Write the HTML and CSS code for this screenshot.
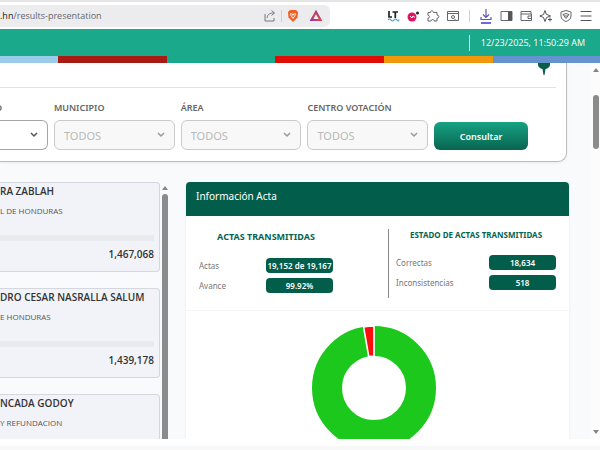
FILE: index.html
```html
<!DOCTYPE html>
<html lang="es">
<head>
<meta charset="utf-8">
<title>Resultados</title>
<link rel="stylesheet" href="styles.css">
</head>
<body>
<div class="toolbar">
  <div class="address">
    <span class="url"><b>.hn</b>/results-presentation</span>
    <svg class="icon" viewBox="0 0 14 14"><path d="M2 5v7h9V9M4 9c.5-4 3-5 7-5M8.500 1.500 11.500 4 8.500 6.500" fill="none" stroke="#77777d"/></svg>
    <span class="sep"></span>
    <svg class="icon" viewBox="0 0 14 14"><path d="M4 1h6l2 2-.5 5.500L7 13 2.500 8.500 2 3z" fill="#ee6024"/><path d="M4 4l2 .7h2l2-.7-.7 3L7 10 4.700 7z" fill="#fff"/><path d="M5 5l1.500.8L7 8l.5-2.200L9 5 8.500 7 7 8.500 5.500 7z" fill="#ee6024"/></svg>
    <svg class="icon tri" viewBox="0 0 14 14"><defs><linearGradient id="g" x1="0" y1="1" x2="1" y2="0"><stop offset="0" stop-color="#8f3a9c"/><stop offset=".5" stop-color="#e5434d"/><stop offset="1" stop-color="#5b3bb0"/></linearGradient></defs><path d="M7 3 11.500 11h-9z" fill="none" stroke="url(#g)" stroke-width="2.200" stroke-linejoin="miter"/></svg>
  </div>
  <div class="tools">
    <svg class="icon" viewBox="0 0 14 14"><path d="M3 2v6h3M6.500 3H12M9.300 3v6" fill="none" stroke="#222" stroke-width="1.700"/><path d="M2 11q1.500-2 3 0t3 0 3 0 2-.5" fill="none" stroke="#3b9dbf" stroke-width="1.200"/></svg>
    <svg class="icon" viewBox="0 0 14 14"><circle cx="6" cy="8" r="4.500" fill="#e3125f"/><path d="M4 7l2 2 1-2 2 1.500" stroke="#fff" fill="none"/><circle cx="11.500" cy="4" r="1.500" fill="#222"/></svg>
    <svg class="icon" viewBox="0 0 14 14"><path d="M2 3.500h2.500C4 1.500 7.500 1 7.500 3.500H11V6c2.500-.3 2.500 3.500 0 3.200V12H8c.3-2-3-2-2.800 0H2V9c2 .2 2-2.800 0-2.600z" fill="none" stroke="#66666b" stroke-linejoin="round"/></svg>
    <svg class="icon" viewBox="0 0 14 14"><path d="M1.500 2.500h11v9h-11zM1.500 4.500h11M8 9.500l1.500 1.500" fill="none" stroke="#66666b"/><circle cx="7" cy="8" r="1.500" fill="none" stroke="#66666b"/></svg>
    <span class="sep"></span>
    <svg class="icon down" viewBox="0 0 14 16"><path d="M7 1v8M4 6.500l3 3 3-3M2 9v2.500h10V9" fill="none" stroke="#5a55c8" stroke-width="1.200"/><path d="M2 15h10" stroke="#3d3ad0" stroke-width="1.500"/></svg>
    <svg class="icon" viewBox="0 0 14 14"><path d="M2 2.500h11v9H2z" fill="none" stroke="#66666b"/><path d="M9 2.500h4v9H9z" fill="#55555a"/></svg>
    <svg class="icon" viewBox="0 0 14 14"><path d="M12 5V2.500H2v9h10.500V5H2M12.500 7H9v2.500h3.500" fill="none" stroke="#66666b"/></svg>
    <svg class="icon" viewBox="0 0 14 14"><path d="M6 1.500l1.300 3.700L11.500 7 7.500 8.500 6 12.500 4.500 8.500.8 7l3.700-1.500z" fill="none" stroke="#55555a" stroke-linejoin="round"/><path d="M11 8.500v4M9 10.500h4" stroke="#55555a"/></svg>
    <svg class="icon" viewBox="0 0 14 14"><path d="M7 1.500l5 1.500v4c0 3-2.500 4.500-5 5.500C4.500 11.500 2 10 2 7V3z" fill="none" stroke="#66666b"/><path d="M4 5.500q3-2 6 0L7 9.500zM5 7h4" fill="none" stroke="#66666b"/></svg>
    <svg class="icon" viewBox="0 0 14 14"><path d="M1.500 2.500h11M1.500 7h11M1.500 11.500h11" stroke="#55555a" stroke-width="1.200"/></svg>
  </div>
</div>
<header class="banner"><time class="clock">12/23/2025, 11:50:29 AM</time></header>
<div class="stripes"><i class="sky"></i><i class="wine"></i><i class="green"></i><i class="red"></i><i class="amber"></i><i class="blue"></i></div>

<div class="page">
  <main class="main">
    <form class="filters">
      <div class="top"><svg class="pin" viewBox="0 0 12 12"><path d="M0 0h12v2Q11.500 5 7.500 6L6.500 12h-1L4.500 6Q.5 5 0 2z" fill="#0a5e4a"/></svg></div>
      <div class="fields">
        <div class="field first">
          <label for="dep">O</label>
          <div class="pick"><select id="dep"><option></option></select><svg class="chev" viewBox="0 0 8 6"><path d="M1 1l3 3 3-3" /></svg></div>
        </div>
        <div class="field">
          <label for="mun">MUNICIPIO</label>
          <div class="pick"><select id="mun" disabled><option>TODOS</option></select><svg class="chev" viewBox="0 0 8 6"><path d="M1 1l3 3 3-3" /></svg></div>
        </div>
        <div class="field">
          <label for="area">ÁREA</label>
          <div class="pick"><select id="area" disabled><option>TODOS</option></select><svg class="chev" viewBox="0 0 8 6"><path d="M1 1l3 3 3-3" /></svg></div>
        </div>
        <div class="field">
          <label for="cen">CENTRO VOTACIÓN</label>
          <div class="pick"><select id="cen" disabled><option>TODOS</option></select><svg class="chev" viewBox="0 0 8 6"><path d="M1 1l3 3 3-3" /></svg></div>
        </div>
        <button class="query" type="button">Consultar</button>
      </div>
    </form>

    <div class="results">
      <div class="list">
        <article class="card"><h2>RA ZABLAH</h2><p>L DE HONDURAS</p><div class="bar"></div><strong>1,467,068</strong></article>
        <article class="card"><h2>DRO CESAR NASRALLA SALUM</h2><p>E HONDURAS</p><div class="bar"></div><strong>1,439,178</strong></article>
        <article class="card"><h2>NCADA GODOY</h2><p>Y REFUNDACION</p><div class="bar"></div></article>
      </div>
      <div class="track"><i class="up"></i><i class="thumb"></i></div>
      <section class="panel">
        <h2 class="head">Información Acta</h2>
        <div class="stats">
          <div class="group left">
            <h3>ACTAS TRANSMITIDAS</h3>
            <dl><dt>Actas</dt><dd>19,152 de 19,167</dd><dt>Avance</dt><dd>99.92%</dd></dl>
          </div>
          <div class="group right">
            <h3>ESTADO DE ACTAS TRANSMITIDAS</h3>
            <dl><dt>Correctas</dt><dd>18,634</dd><dt>Inconsistencias</dt><dd>518</dd></dl>
          </div>
        </div>
        <div class="chart">
          <svg class="donut" viewBox="0 0 126 126">
            <circle cx="63" cy="63" r="47" fill="none" stroke="#1bc81b" stroke-width="30"/>
            <path d="M63 1A62 62 0 0 0 52.600 1.900L57.700 31.500A32 32 0 0 1 63 31z" fill="#f90d0d" stroke="#fff" stroke-width="1.600"/>
          </svg>
        </div>
      </section>
    </div>
  </main>
  <div class="gutter"><i class="up"></i><i class="thumb"></i><i class="dn"></i></div>
</div>
<footer class="foot"></footer>
</body>
</html>
```
FILE: styles.css
```css
* { box-sizing: border-box; }
body {
  margin: 0;
  height: 100vh;
  display: flex;
  flex-direction: column;
  overflow: hidden;
  background: #fff;
  color: #333;
  font-family: "Noto Sans", "Open Sans", sans-serif;
}
h2, h3, p, dl, dd { margin: 0; }
i { display: block; }

.toolbar {
  flex: none;
  display: flex;
  justify-content: space-between;
  align-items: center;
  height: 29px;
  padding: 0 7px 0 0;
  border-top: 2px solid #e5e5e8;
}
.address {
  flex: 0 0 55vw;
  display: flex;
  align-items: center;
  height: 22px;
  padding-right: 7px;
  border-radius: 0 6px 6px 0;
  background: #ececef;
}
.url { flex: 1; font: 9px "Open Sans", sans-serif; color: #66666c; }
.url b { font-weight: 400; color: #222; }
.icon { flex: none; width: 14px; height: 14px; }
.tri { margin-left: 9px; }
.sep { width: 1px; height: 12px; margin: 0 4px; background: #cfcfd4; }
.tools { display: flex; align-items: center; gap: 6px; }
.tools .sep { margin: 0 3px; }
.down { height: 16px; }

.banner {
  flex: none;
  display: flex;
  justify-content: flex-end;
  align-items: center;
  height: 27px;
  padding-right: 15px;
  background: #1aa98b;
}
.clock {
  padding-left: 11px;
  border-left: 1px solid #d6f0ea;
  font: 9px/16px "Open Sans", sans-serif;
  color: #fff;
}
.stripes { flex: none; display: grid; grid-template-columns: 58fr 109fr 108fr 109fr 109fr 107fr; height: 7px; }
.sky { background: #9bcdea; }
.wine { background: #a81a12; }
.green { background: #1aa98b; }
.red { background: #e00d05; }
.amber { background: #f0970c; }
.blue { background: #6493cd; }

.page { flex: 1; min-height: 0; display: flex; background: #f9fafb; }
.main { flex: 1; min-width: 0; display: flex; flex-direction: column; }
.gutter {
  flex: none;
  display: flex;
  flex-direction: column;
  align-items: center;
  width: 9px;
  padding: 5px 0;
  background: #fcfcfc;
}
.gutter .thumb { width: 6px; height: 54px; margin-top: 23px; border-radius: 3px; background: #8b8b8b; }
.up { border: 3px solid transparent; border-top: 0; border-bottom: 4px solid #858585; }
.dn { margin-top: auto; border: 3px solid transparent; border-bottom: 0; border-top: 4px solid #858585; }

.filters {
  flex: none;
  margin-right: 24px;
  padding-bottom: 11px;
  border: 1px solid #bdbdbf;
  border-width: 0 1px 1px 0;
  border-radius: 0 0 9px 0;
  background: #fff;
  box-shadow: 0 1px 3px #0001;
}
.top {
  display: flex;
  justify-content: flex-end;
  height: 25px;
  margin-right: 10px;
  padding-right: 6px;
  border-bottom: 1px solid #e2e2e2;
}
.pin { width: 12px; height: 12px; }
.fields {
  display: grid;
  grid-template-columns: 48fr 121fr 121fr 121fr 94fr;
  gap: 6px;
  align-items: end;
  padding: 12px 38px 0 0;
}
.field { min-width: 0; }
.field label { display: block; margin-bottom: 5px; font-size: 9px; line-height: 15px; font-weight: 600; color: #666; white-space: nowrap; }
.first label { text-indent: -5px; }
.pick { position: relative; }
.pick select {
  display: block;
  width: 100%;
  height: 30px;
  padding: 0 9px;
  appearance: none;
  border: 1px solid #cacaca;
  border-radius: 6px;
  background: #f8f8f8;
  color: #b9b9b9;
  font: 11px "Noto Sans", sans-serif;
  opacity: 1;
}
.first select { border-color: #a5a5a5; border-left: 0; border-radius: 0 6px 6px 0; background: #fff; }
.chev { position: absolute; top: 12px; right: 10px; width: 8px; height: 6px; fill: none; stroke: #999; stroke-width: 1.500; }
.first .chev { stroke: #555; }
.query {
  height: 28px;
  padding: 0;
  border: 0;
  border-radius: 6px;
  background: linear-gradient(#17a283, #086550);
  color: #fff;
  font: 600 9px "Noto Sans", sans-serif;
}

.results { flex: 1; min-height: 0; display: flex; margin-top: 20px; overflow: hidden; }
.list { flex: 0 1 160px; display: flex; flex-direction: column; gap: 16px; }
.card {
  flex: none;
  display: flex;
  flex-direction: column;
  height: 90px;
  padding: 0 5px 0 0;
  border: 1px solid #d4d7dd;
  border-left: 0;
  border-radius: 0 4px 4px 0;
  background: #f2f3f8;
  font-family: "Open Sans", sans-serif;
}
.card h2 { font-size: 10px; line-height: 16px; font-weight: 600; white-space: nowrap; }
.card p { margin-top: 4px; font-size: 8px; line-height: 16px; color: #555; }
.bar { height: 6px; margin-top: 16px; background: #e9eaee; }
.card strong { align-self: flex-end; margin-top: 5px; font-size: 10px; line-height: 16px; font-weight: 600; }
.track { flex: none; display: flex; flex-direction: column; align-items: center; width: 6px; margin: 4px 18px 0 2px; }
.track .thumb { flex: 1; width: 6px; margin-top: 4px; border-radius: 3px 3px 0 0; background: #8b8b8b; }

.panel { flex: 1; display: flex; flex-direction: column; margin-right: 22px; border-radius: 4px 4px 0 0; background: #fff; overflow: hidden; box-shadow: 0 0 3px #0001; }
.head { flex: none; height: 34px; padding: 6px 10px; background: #025e4b; color: #fff; font: 400 10px/16px "Noto Sans", sans-serif; }
.stats { flex: none; display: grid; grid-template-columns: 203fr 180fr; height: 95px; padding-top: 13px; border-bottom: 1px solid #f5f5f5; }
.group h3 { color: #08644f; font-size: 9px; line-height: 12px; font-weight: 700; text-align: center; white-space: nowrap; }
.group dl { display: grid; grid-template-columns: 1fr 67px; gap: 5px 0; align-items: center; }
.group dt { color: #777; font-size: 8px; line-height: 15px; }
.group dd { border-radius: 4px; background: #025e4b; color: #fff; font-size: 8px; line-height: 15px; font-weight: 600; text-align: center; white-space: nowrap; }
.left { height: 69px; padding: 2px 55px 0 13px; border-right: 1px solid #888; }
.left dl { margin-top: 15px; }
.right { padding: 0 13px 0 7px; }
.right h3 { font-size: 8px; }
.right dl { margin-top: 14px; }
.chart { flex: 1; min-height: 0; display: flex; justify-content: center; align-items: flex-start; padding-top: 14px; overflow: hidden; }
.donut { flex: none; width: 126px; height: 126px; margin-right: 8px; }

.foot { flex: none; height: 11px; border-bottom: 4px solid #f8f8f8; background: #fff; }
```
